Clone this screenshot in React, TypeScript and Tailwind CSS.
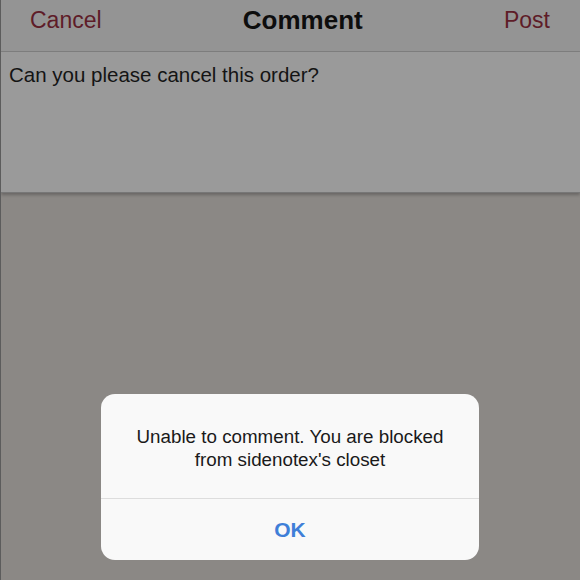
export default function App() {
  return (
    <div
      className="flex h-[580px] w-[580px] flex-col overflow-hidden border-l border-[#5c5c5c] bg-[#8b8885]"
      style={{ fontFamily: '"Liberation Sans", Arial, sans-serif' }}
    >
      {/* nav bar */}
      <header className="flex h-[52px] shrink-0 items-center justify-between border-b border-[#7f7f7f] bg-[#949494] pb-[10px] pl-[29px] pr-[30px]">
        <span className="text-[23px] text-[#5e1c28]">Cancel</span>
        <h1 className="text-[26px] font-bold text-[#0d0d0d]">Comment</h1>
        <span className="text-[23px] text-[#5e1c28]">Post</span>
      </header>

      {/* comment field */}
      <div className="h-[141px] shrink-0 border-b border-[#777] bg-[#9a9a9a] px-2 pt-[11px] shadow-[0_2px_3px_rgba(0,0,0,0.25)]">
        <p className="text-[20.5px] leading-6 text-[#141414]">Can you please cancel this order?</p>
      </div>

      {/* dimmed backdrop with alert */}
      <div className="-ml-px flex flex-1 items-end justify-center pb-5">
        <div className="w-[378px] overflow-hidden rounded-[14px] bg-[#f9f9f9]">
          <div className="flex h-[104px] items-center justify-center px-6 pt-1 text-center">
            <p className="text-[18.8px] leading-[23px] text-[#1a1a1a]">
              Unable to comment. You are blocked
              <br />
              from sidenotex's closet
            </p>
          </div>
          <div className="h-px bg-[#dddddd]" />
          <button className="flex h-[61px] w-full items-center justify-center text-[21px] font-bold text-[#3f7fd8]">
            OK
          </button>
        </div>
      </div>
    </div>
  );
}
